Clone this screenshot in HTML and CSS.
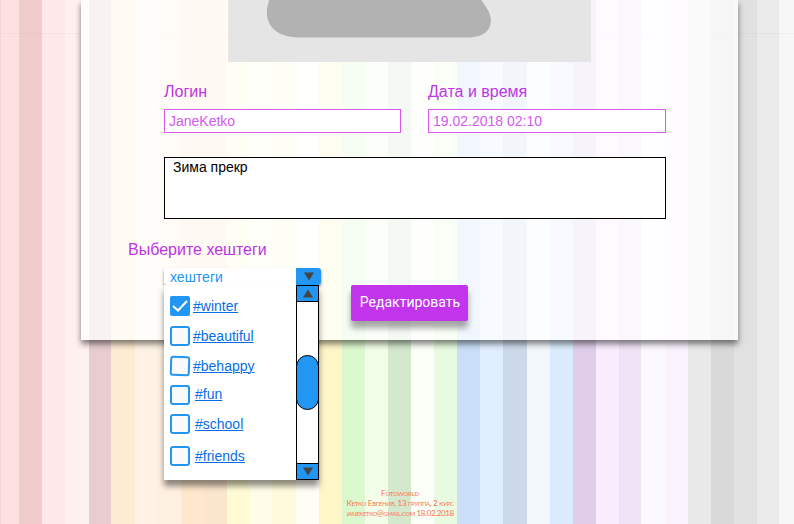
FILE: index.html
```
<!DOCTYPE html>
<html lang="ru">
<head>
<meta charset="utf-8">
<title>Fotoworld</title>
<link rel="stylesheet" href="styles.css">
</head>
<body>
<main class="panel">
  <div class="photo">
    <svg width="363" height="62" viewBox="0 0 363 62"><path d="M42-2C32 23 47 37.500 71 37.500H241C263 37.500 268 21 258 7L252-2Z" fill="#b2b2b2"/></svg>
  </div>
  <form class="form">
    <div class="fields">
      <div class="field"><div class="label">Логин</div><div class="input">JaneKetko</div></div>
      <div class="field"><div class="label">Дата и время</div><div class="input date">19.02.2018 02:10</div></div>
    </div>
    <div class="comment">Зима прекр</div>
    <div class="label tags-label">Выберите хештеги</div>
    <div class="actions">
      <div class="select">
        <div class="select-head"><span>хештеги</span><div class="toggle"><svg width="12" height="9"><path d="M1 .5H11L6 8.500Z" fill="#444"/></svg></div></div>
        <div class="menu">
          <div class="options">
            <div class="option"><svg class="check" width="20" height="20"><rect width="20" height="20" rx="2" fill="#2196f3"/><path d="M3 10L8 14.500L17 5" fill="none" stroke="#fff" stroke-width="2"/></svg><a href="#">#winter</a></div>
            <div class="option"><span class="box"></span><a href="#">#beautiful</a></div>
            <div class="option"><span class="box tilted"></span><a href="#">#behappy</a></div>
            <div class="option fun"><span class="box"></span><a href="#">#fun</a></div>
            <div class="option school"><span class="box"></span><a href="#">#school</a></div>
            <div class="option friends"><span class="box"></span><a href="#">#friends</a></div>
          </div>
          <div class="scrollbar">
            <div class="arrow up"><svg width="12" height="9"><path d="M1 8.500H11L6 .5Z" fill="#444"/></svg></div>
            <div class="thumb"></div>
            <div class="arrow down"><svg width="12" height="9"><path d="M1 .5H11L6 8.500Z" fill="#444"/></svg></div>
          </div>
        </div>
      </div>
      <div class="button">Редактировать</div>
    </div>
  </form>
</main>
<footer class="footer">
  <div class="brand">Fotoworld</div>
  <div class="author">Кетко Евгения, 13 группа, 2 курс</div>
  <div class="mail">janeketko@gmail.com 18.02.2018</div>
</footer>
</body>
</html>
```
FILE: styles.css
```
* { box-sizing: border-box; }
body {
  margin: 0;
  width: 794px;
  height: 524px;
  overflow: hidden;
  font-family: "Liberation Sans", sans-serif;
  background:
    linear-gradient(rgba(90, 60, 60, .04), rgba(90, 60, 60, .04)) 0 33px / 100% 1px no-repeat,
    linear-gradient(90deg,
    #f8d5d5 0 1px, #ffe0e0 1px 19px, #f0cccc 19px 42px, #ffe8ea 42px 65px, #fff1f0 65px 88.500px,
    #e8cccf 88.500px 111px, #fdebd3 111px 134.500px, #fef3e5 134.500px 157px,
    #fff0e0 157px 180.500px, #fee7cd 180.500px 203.500px, #fae6cd 203.500px 226.500px,
    #fffbd5 226.500px 249px, #fffde8 249px 272px, #fffadb 272px 295.500px,
    #fffef5 295.500px 319px, #fff6c8 319px 342px, #dcf8ce 342px 365px,
    #f2fee8 365px 388px, #d4e8cd 388px 411px, #fafff7 411px 434px, #e8fae0 434px 457px,
    #cadff7 457px 480px, #e0efff 480px 503px, #cbd9e9 503px 526.500px,
    #f2f7fc 526.500px 549.500px, #d9ebfd 549.500px 572.500px, #e0cdea 572.500px 595.500px,
    #f9ecff 595.500px 618.500px, #efe4f5 618.500px 641px, #fcf8ff 641px 665px,
    #faf3fe 665px 687.500px, #e9e9e9 687.500px 711px, #d9d9d9 711px 733.500px,
    #e1e1e1 733.500px 756.500px, #eaeaea 756.500px 779px, #f7f7f7 779px);
}
.panel {
  width: 657px;
  height: 340px;
  margin-left: 81px;
  background: rgba(255, 255, 255, .75);
  box-shadow: 0 4px 6px rgba(0, 0, 0, .5);
}
.photo { width: 363px; height: 62px; margin-left: 147px; background: #e5e5e5; }
.photo svg { display: block; }
.form { padding: 20px 72px 0 83px; }
.fields { display: flex; gap: 27px; }
.field { width: 237px; }
.field + .field { width: 238px; }
.label { font-size: 16px; line-height: 20px; color: #bd35e5; }
.input {
  height: 24px;
  margin-top: 7px;
  padding-left: 4px;
  border: 1px solid #d75aed;
  background: #fff;
  color: #d35aed;
  font-size: 14px;
  line-height: 23px;
}
.comment {
  height: 62px;
  margin-top: 24px;
  padding: 0 8px;
  border: 1px solid #000;
  background: #fff;
  font-size: 14px;
  line-height: 18px;
}
.tags-label { margin: 21px 0 0 -36px; }
.actions { display: flex; align-items: flex-start; margin-top: 8px; }
.select { position: relative; width: 157px; }
.select-head {
  display: flex;
  justify-content: space-between;
  height: 17px;
  padding-left: 6px;
  border-radius: 3px;
  background: #fff;
  color: #2196f3;
  font-size: 14px;
  line-height: 18px;
  box-shadow: 0 2px 3px rgba(0, 0, 0, .45);
}
.toggle { display: flex; align-items: center; justify-content: center; width: 25px; background: #2196f3; border-radius: 0 3px 3px 0; }
.menu {
  position: absolute;
  top: 17px;
  left: 0;
  display: flex;
  width: 155px;
  height: 195px;
  background: #fff;
  box-shadow: 0 6px 6px rgba(0, 0, 0, .45);
}
.options { width: 132px; padding: 11px 0 0 6px; }
.option { display: flex; align-items: center; gap: 3px; height: 20px; margin-bottom: 10px; font-size: 14px; line-height: 20px; }
.option a { color: #086ee8; text-underline-offset: 1px; text-decoration-thickness: 1px; }
.box { width: 20px; height: 20px; border: 2px solid #2196f3; border-radius: 3px; background: #fafafa; }
.tilted { transform: rotate(2deg); }
.fun { gap: 5px; margin: -1px 0 9px; }
.fun a { margin-top: -2px; }
.school { gap: 5px; margin-bottom: 12px; }
.friends { gap: 5px; }
.scrollbar { display: flex; flex-direction: column; width: 23px; height: 195px; border: 1px solid #000; background: #fff; }
.arrow { display: flex; align-items: center; justify-content: center; height: 16px; background: #2196f3; }
.up { border-bottom: 1px solid #000; }
.down { margin-top: auto; border-top: 1px solid #000; }
.thumb { height: 55px; margin: 53px -1px 0; border: 1px solid #000; border-radius: 12px; background: #2196f3; }
.button {
  width: 117px;
  height: 36px;
  margin: 17px 0 0 30px;
  padding-left: 1px;
  border-radius: 2px;
  background: #c235ed;
  color: #fff;
  font: 14px/35px Roboto, sans-serif;
  text-align: center;
  box-shadow: 0 7px 6px rgba(0, 0, 0, .35);
}
.footer { width: 110px; margin: 148px 0 0 345px; color: #ff7352; font-family: Lato, sans-serif; font-size: 8px; line-height: 10px; font-variant-caps: small-caps; text-align: center; white-space: nowrap; }
.brand { letter-spacing: -.2px; }
.author { letter-spacing: -.28px; }
.mail { letter-spacing: -.37px; }
```
